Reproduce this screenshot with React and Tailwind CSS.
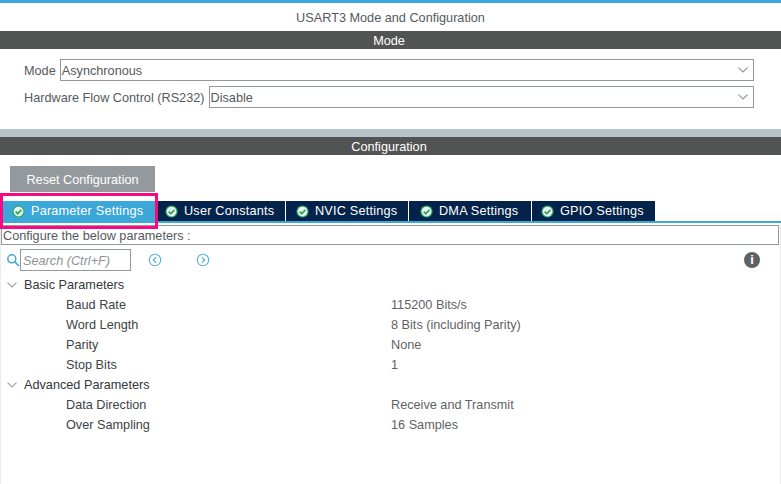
import React from "react";

const font = { fontFamily: '"Liberation Sans", Arial, sans-serif' };

function Check() {
  return (
    <svg width="13" height="13" viewBox="0 0 12 12" className="shrink-0">
      <circle cx="6" cy="6" r="5.6" fill="#2fa866" />
      <circle cx="6" cy="6" r="4.5" fill="#e9f6ee" />
      <path d="M3.4 6.1 5.3 8 8.7 4.5" fill="none" stroke="#2fa866" strokeWidth="1.7" />
    </svg>
  );
}

function Chevron({ color = "#8c9296", width = 10 }) {
  return (
    <svg width={width} height="6" viewBox="0 0 10 6" className="shrink-0">
      <path d="M0.5 0.7 5 5 9.5 0.7" fill="none" stroke={color} strokeWidth="1.1" />
    </svg>
  );
}

function Select({ value }) {
  return (
    <div className="flex-1 h-[22px] border border-[#92989c] flex items-center justify-between pl-[1px] pr-[5px] text-[#565a5c]">
      <span className="pt-[2px]">{value}</span>
      <Chevron />
    </div>
  );
}

function Tab({ label, active, width, pad }) {
  return (
    <div
      className={`h-[20px] flex items-center gap-[6px] text-white tracking-[0.2px] border-r border-white ${pad} ${active ? "bg-[#3ca7d9]" : "bg-[#03234b]"}`}
      style={{ width }}
    >
      <Check />
      <span>{label}</span>
    </div>
  );
}

function Group({ label }) {
  return (
    <div className="h-[20px] flex items-center text-[#33383b]">
      <span className="w-[24px] flex pl-[7px]">
        <Chevron color="#9a9fa3" />
      </span>
      <span>{label}</span>
    </div>
  );
}

function Param({ name, value }) {
  return (
    <div className="h-[20px] flex items-center">
      <span className="w-[391px] pl-[66px] text-[#3e4346]">{name}</span>
      <span className="text-[#5f6366]">{value}</span>
    </div>
  );
}

function Round({ dir }) {
  return (
    <svg width="14" height="14" viewBox="0 0 14 14">
      <circle cx="7" cy="7" r="5.7" fill="none" stroke="#4fb0de" strokeWidth="1.1" />
      <path d={dir === "l" ? "M8 4.3 5.3 7 8 9.7" : "M6 4.3 8.7 7 6 9.7"} fill="none" stroke="#4fb0de" strokeWidth="1.2" />
    </svg>
  );
}

export default function App() {
  return (
    <div className="w-[781px] h-[484px] overflow-hidden bg-white text-[12.7px] leading-[14px] flex flex-col" style={font}>
      <div className="h-[3px] bg-[#3ca7d9]" />
      <div className="h-[28px] flex items-center justify-center text-[#565a5c] pt-[2px]">USART3 Mode and Configuration</div>
      <div className="h-[18px] bg-[#525453] text-white flex items-center justify-center pt-[1px] pr-[3px]">Mode</div>

      <div className="h-[80px] pt-[10px] pl-[24px] pr-[27px] flex flex-col gap-[5px] text-[#565a5c]">
        <div className="flex items-center gap-[4px]">
          <span className="pt-[2px]">Mode</span>
          <Select value="Asynchronous" />
        </div>
        <div className="flex items-center gap-[4px]">
          <span className="pt-[2px]">Hardware Flow Control (RS232)</span>
          <Select value="Disable" />
        </div>
      </div>

      <div className="h-[8px] bg-[#b9c4ca]" />
      <div className="h-[18px] bg-[#525453] text-white flex items-center justify-center pt-[1px] pr-[3px]">Configuration</div>

      <div className="pt-[11px] pl-[10px]">
        <div className="w-[145px] h-[26px] bg-[#94999d] text-white flex items-center justify-center pt-[2px]">
          Reset Configuration
        </div>
      </div>

      <div className="relative mt-[9px] pl-[2px] flex border-b-2 border-[#3ca7d9] h-[22px]">
        <Tab label="Parameter Settings" active width={154} pad="pl-[10px]" />
        <Tab label="User Constants" width={130} pad="pl-[9px]" />
        <Tab label="NVIC Settings" width={123} pad="pl-[10px]" />
        <Tab label="DMA Settings" width={123} pad="pl-[11px]" />
        <Tab label="GPIO Settings" width={124} pad="pl-[9px]" />
        <div className="absolute left-0 top-[-8px] w-[158px] h-[36px] border-[3px] border-[#f50a82]" />
      </div>

      <div className="flex-1 flex flex-col border-x border-[#ececec]">
        <div className="mt-[2px] h-[20px] border border-[#92989c] mr-[1px] flex items-center text-[#565a5c] pl-[1px] pt-[1px]">
          Configure the below parameters :
        </div>
        <div className="h-[26px] mt-[2px] flex items-center relative text-[#8f9396]">
          <svg width="14" height="14" viewBox="0 0 14 14" className="ml-[5px]">
            <circle cx="5.8" cy="5.8" r="4" fill="none" stroke="#3ca7d9" strokeWidth="1.5" />
            <path d="M8.8 8.8 13 13" stroke="#3ca7d9" strokeWidth="1.7" />
          </svg>
          <div className="w-[111px] h-[22px] border border-[#92989c] flex items-center pl-[2px] pt-[2px] italic">Search (Ctrl+F)</div>
          <div className="ml-[17px]"><Round dir="l" /></div>
          <div className="ml-[34px]"><Round dir="r" /></div>
          <div className="ml-auto mr-[20px] w-[16px] h-[16px] rounded-full bg-[#5f6163] text-white flex items-center justify-center font-bold text-[13px]">i</div>
        </div>
        <div className="mt-[2px] -ml-[1px]">
          <Group label="Basic Parameters" />
          <Param name="Baud Rate" value="115200 Bits/s" />
          <Param name="Word Length" value="8 Bits (including Parity)" />
          <Param name="Parity" value="None" />
          <Param name="Stop Bits" value="1" />
          <Group label="Advanced Parameters" />
          <Param name="Data Direction" value="Receive and Transmit" />
          <Param name="Over Sampling" value="16 Samples" />
        </div>
      </div>
    </div>
  );
}
